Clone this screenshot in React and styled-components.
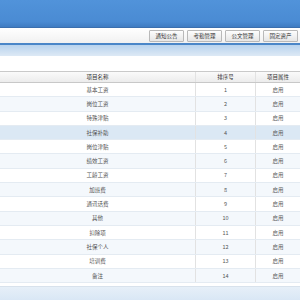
import React from "react";
import styled, { createGlobalStyle } from "styled-components";

const GlobalStyle = createGlobalStyle`
  html, body { margin: 0; padding: 0; background: #fff; }
  body { font-family: "Noto Sans CJK SC", "Liberation Sans", sans-serif; }
`;

const Page = styled.div`
  width: 300px;
  height: 300px;
  overflow: hidden;
  display: flex;
  flex-direction: column;
  background: #fff;
`;

const Header = styled.div`
  height: 27px;
  background: linear-gradient(#5193da, #4a8bd3 80%, #3f7cc2);
  border-bottom: 1px solid #3b6fae;
`;

const Toolbar = styled.div`
  height: 15px;
  display: flex;
  justify-content: flex-end;
  align-items: center;
  gap: 3px;
  padding-right: 2px;
  background: linear-gradient(#ffffff, #f1f1f1);
  border-bottom: 2px solid #4a86c8;
`;

const Tab = styled.div`
  width: 33px;
  height: 10px;
  display: flex;
  align-items: center;
  justify-content: center;
  font-size: 5.5px;
  color: #333;
  background: linear-gradient(#fdfdfd, #e6e6e6);
  border: 1px solid #b9b9b9;
  border-radius: 1px;
`;

const SubBar = styled.div`
  height: 11px;
  background: linear-gradient(#b8d3ee, #dde9f5);
`;

const Spacer = styled.div`
  height: 15px;
  background: #fff;
`;

const Table = styled.div`
  display: flex;
  flex-direction: column;
  border-top: 1px solid #c9c9c9;
`;

const Row = styled.div`
  display: grid;
  grid-template-columns: 195px 60px 1fr;
  height: ${p => (p.head ? "10px" : "13.3px")};
  background: ${p => (p.active ? "#dbe8f4" : p.alt ? "#f4f8fc" : "#fff")};
  border-bottom: 1px solid ${p => (p.head ? "#c8c8c8" : "#e4ebf2")};
  ${p => p.head && "background: linear-gradient(#fafafa, #ececec);"}
`;

const Cell = styled.div`
  display: flex;
  align-items: center;
  justify-content: center;
  font-size: 5.5px;
  color: ${p => (p.head ? "#333" : "#555")};
  border-left: ${p => (p.first ? "none" : "1px solid #e2e2e2")};
`;

const Footer = styled.div`
  flex: 1;
  margin-top: 3px;
  border-top: 1px solid #d8e2ec;
  background: linear-gradient(#e6eff8, #d9e7f5);
`;

const tabs = ["通知公告", "考勤管理", "公文管理", "固定资产"];

const items = [
  "基本工资",
  "岗位工资",
  "特殊津贴",
  "社保补助",
  "岗位津贴",
  "绩效工资",
  "工龄工资",
  "加班费",
  "通讯话费",
  "其他",
  "扣除项",
  "社保个人",
  "培训费",
  "备注"
];

const App = () => {
  return (
    <Page>
      <GlobalStyle />
      <Header />
      <Toolbar>
        {tabs.map(t => (
          <Tab key={t}>{t}</Tab>
        ))}
      </Toolbar>
      <SubBar />
      <Spacer />
      <Table>
        <Row head>
          <Cell head first>项目名称</Cell>
          <Cell head>排序号</Cell>
          <Cell head>项目属性</Cell>
        </Row>
        {items.map((name, i) => (
          <Row key={name} alt={i % 2 === 1} active={i === 3}>
            <Cell first>{name}</Cell>
            <Cell>{i + 1}</Cell>
            <Cell>启用</Cell>
          </Row>
        ))}
      </Table>
      <Footer />
    </Page>
  );
};

export default App;
